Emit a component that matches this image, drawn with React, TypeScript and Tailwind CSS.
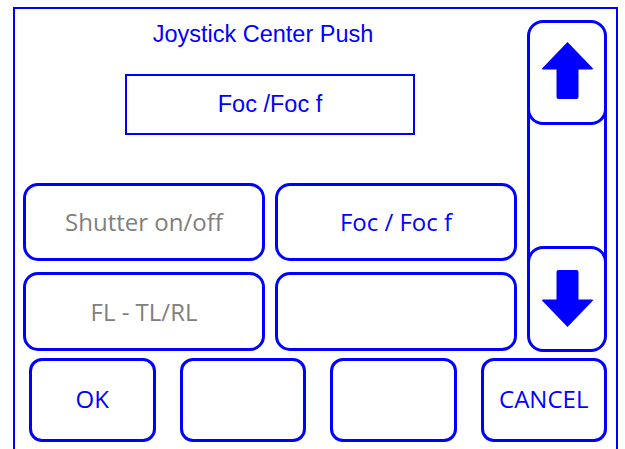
const blue = "text-[#0000ff]";

function UpArrow({ down = false }: { down?: boolean }) {
  return (
    <svg
      width="51"
      height="57"
      viewBox="0 0 51 57"
      className={down ? "rotate-180" : ""}
      fill="#0000ff"
    >
      <path d="M25.5 0 L51 26.5 Q51 27.5 50 27.5 L36.5 27.5 L36.5 55 Q36.5 57 34.5 57 L16.5 57 Q14.5 57 14.5 55 L14.5 27.5 L1 27.5 Q0 27.5 0 26.5 Z" />
    </svg>
  );
}

function GridButton({ label, muted }: { label?: string; muted?: boolean }) {
  return (
    <div
      className={`flex items-center justify-center rounded-[15px] border-[3px] border-[#0000ff] text-[24px] ${
        muted ? "text-[#808080]" : blue
      }`}
    >
      {label}
    </div>
  );
}

function BottomButton({ label }: { label?: string }) {
  return (
    <div
      className={`flex h-[84px] w-[127px] items-center justify-center rounded-[13px] border-[3px] border-[#0000ff] pb-[3px] text-[24px] ${blue}`}
    >
      {label}
    </div>
  );
}

export default function App() {
  return (
    <div className="h-[449px] w-[625px] overflow-hidden bg-white font-['Open_Sans',sans-serif]">
      <div className="ml-[13px] mt-[7px] h-[460px] w-[605px] border-2 border-[#0000ff] pl-[8px] pr-[9px]">
        <div className="flex gap-[10px]">
          <div className="flex w-[494px] flex-col">
            <div
              className={`mt-[11px] h-[28px] pr-[14px] text-center font-['Liberation_Sans',Arial,sans-serif] text-[23.5px] leading-[28px] ${blue}`}
            >
              Joystick Center Push
            </div>
            <div
              className={`mx-auto mt-[26px] flex h-[61px] w-[290px] items-center justify-center border-2 border-[#0000ff] font-['Liberation_Sans',Arial,sans-serif] text-[23.5px] ${blue}`}
            >
              Foc /Foc f
            </div>
            <div className="mt-[48px] grid grid-cols-2 grid-rows-[78px_79px] gap-x-[10px] gap-y-[11px]">
              <GridButton label="Shutter on/off" muted />
              <GridButton label="Foc / Foc f" />
              <GridButton label="FL - TL/RL" muted />
              <GridButton />
            </div>
          </div>
          <div className="mt-[11px] flex h-[332px] w-[80px] flex-col">
            <div className="flex h-[105px] shrink-0 items-center justify-center rounded-[16px] border-[3px] border-[#0000ff] pb-[4px]">
              <UpArrow />
            </div>
            <div className="-my-[18px] flex-1 border-x-[3px] border-[#0000ff]" />
            <div className="flex h-[106px] shrink-0 items-center justify-center rounded-[16px] border-[3px] border-[#0000ff] pb-[2px]">
              <UpArrow down />
            </div>
          </div>
        </div>
        <div className="mt-[6px] flex gap-[24px] pl-[6px]">
          <BottomButton label="OK" />
          <BottomButton />
          <BottomButton />
          <BottomButton label="CANCEL" />
        </div>
      </div>
    </div>
  );
}
